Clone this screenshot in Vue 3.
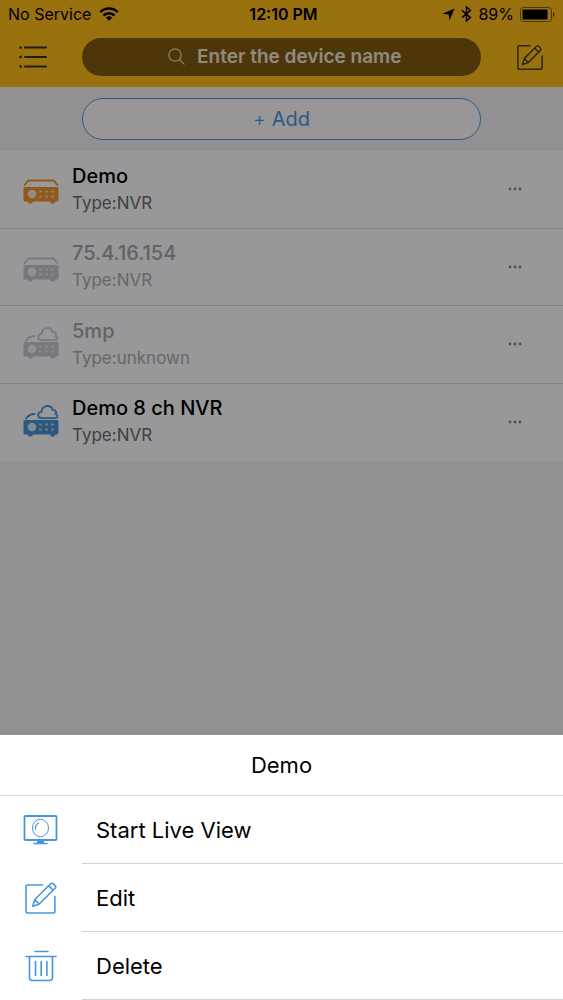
<script setup>
import { ref } from 'vue'

const query = ref('')
const devices = [
  { name: 'Demo', type: 'NVR', tone: 'orange', cloud: false, online: true },
  { name: '75.4.16.154', type: 'NVR', tone: 'grey', cloud: false, online: false },
  { name: '5mp', type: 'unknown', tone: 'grey', cloud: true, online: false },
  { name: 'Demo 8 ch NVR', type: 'NVR', tone: 'blue', cloud: true, online: true },
]
const actions = [
  { label: 'Start Live View', icon: 'monitor' },
  { label: 'Edit', icon: 'edit' },
  { label: 'Delete', icon: 'trash' },
]
</script>

<template>
  <div class="screen">
    <header class="top">
      <div class="status">
        <div class="status-side">
          <span>No Service</span>
          <svg width="20" height="14" viewBox="0 0 20 14" aria-hidden="true">
            <g fill="none" stroke="#000" stroke-width="2.6">
              <path d="M1.3 5.1a12.4 12.4 0 0 1 17.4 0" />
              <path d="M4.5 8.5a7.8 7.8 0 0 1 11 0" />
            </g>
            <path d="M10 13.8l-3-3.1a4.3 4.3 0 0 1 6 0z" />
          </svg>
        </div>
        <strong class="clock">12:10 PM</strong>
        <div class="status-side end">
          <svg width="13" height="13" viewBox="0 0 13 13" aria-hidden="true"><path d="M12.6.4L7.4 12.6 6.7 6.4.4 5.7z" /></svg>
          <svg width="11" height="16" viewBox="0 0 11 16" aria-hidden="true">
            <path d="M1 4.4l8.4 7.2L5.5 15V1l3.9 3.4L1 11.6" fill="none" stroke="#000" stroke-width="1.4" />
          </svg>
          <span>89%</span>
          <svg width="35" height="15" viewBox="0 0 35 15" aria-hidden="true">
            <rect x=".5" y=".5" width="31" height="14" rx="3" fill="none" stroke="#000" stroke-opacity=".5" />
            <rect x="2.5" y="2.5" width="25" height="10" rx="1" />
            <path d="M33 5c2 .7 2 4.3 0 5z" fill-opacity=".6" />
          </svg>
        </div>
      </div>
      <div class="nav">
        <button class="icon-button" type="button" aria-label="Menu">
          <svg width="28" height="24" viewBox="0 0 28 24" fill="none" stroke="#36301c" stroke-linecap="round" stroke-width="2">
            <path d="M6 2.500h21M6 12h21M6 21.500h21" />
            <path d="M1.500 2.500h.2M1.500 12h.2M1.500 21.500h.2" stroke-width="2.400" />
          </svg>
        </button>
        <label class="search">
          <svg width="17" height="17" viewBox="0 0 17 17" fill="none" stroke="#e8d2a8" stroke-width="1.3" stroke-linecap="round" aria-hidden="true">
            <circle cx="7" cy="7" r="6.200" /><path d="M11.500 11.500l4.600 4.600" />
          </svg>
          <input v-model="query" type="text" placeholder="Enter the device name" aria-label="Enter the device name">
        </label>
        <button class="icon-button" type="button" aria-label="Edit devices">
          <svg width="28" height="28" viewBox="0 0 30 30" fill="none" stroke="#4d4024" stroke-width="1.6" stroke-linejoin="round" stroke-linecap="round">
            <path d="M15 3H3a1 1 0 0 0-1 1v23a1 1 0 0 0 1 1h24a1 1 0 0 0 1-1V14" />
            <path d="M7 23l2-6.500L22 3.500q1.300-1 2.600.2l1.600 1.600q1.200 1.300 0 2.600L13 21zM20 5.500l4.200 4.200M9 16.600l4 4.200" />
          </svg>
        </button>
      </div>
    </header>

    <div class="add-bar">
      <button class="add" type="button"><span class="plus">+</span> Add</button>
    </div>

    <ul class="devices">
      <li v-for="d in devices" :key="d.name" class="device" :class="{ offline: !d.online }">
        <svg class="device-icon" :class="d.tone" width="38" height="34" viewBox="0 0 38 34" aria-hidden="true">
          <path v-if="!d.cloud" class="line" d="M2.500 13l3-3.600q.7-.9 2-.9h23q1.300 0 2 .9l3 3.600" />
          <g v-else class="line">
            <path d="M4 13.500q3.500-4.500 8.500-4.500" />
            <path d="M19.500 13.200c-4.500-.3-4.500-6 0-6.400C20-.2 29-.8 30.500 4.800c3.800-.2 4.200 3.400 3 4.200 3 1 2.200 4.200-.5 4.200z" />
          </g>
          <path class="body" d="M3 15h32q1.500 0 1.500 1.500v11.500q0 1.500-1.500 1.500h-1.500l-1.500 2h-3l-1-2H11l-1 2H7l-1.500-2H3q-1.500 0-1.500-1.500V16.500Q1.500 15 3 15z" />
          <circle class="hole" cx="10" cy="22" r="4.300" />
          <g class="hole faint">
            <rect x="17" y="18.500" width="3" height="2" /><rect x="23" y="18.500" width="3" height="2" /><rect x="29" y="18.500" width="3" height="2" />
            <rect x="17" y="23.500" width="3" height="2" /><rect x="23" y="23.500" width="3" height="2" /><rect x="29" y="23.500" width="3" height="2" />
          </g>
        </svg>
        <div class="device-text">
          <div class="name">{{ d.name }}</div>
          <div class="type">Type:{{ d.type }}</div>
        </div>
        <button class="more" type="button" :aria-label="'More options for ' + d.name">
          <svg width="14" height="4" viewBox="0 0 14 4" fill="#85838a"><circle cx="2" cy="2" r="1.400" /><circle cx="7" cy="2" r="1.400" /><circle cx="12" cy="2" r="1.400" /></svg>
        </button>
      </li>
    </ul>

    <div class="overlay">
      <section class="sheet" role="dialog" aria-labelledby="sheet-title">
        <h2 id="sheet-title">Demo</h2>
        <button v-for="a in actions" :key="a.label" class="action" type="button">
          <span class="action-icon">
            <svg v-if="a.icon === 'monitor'" width="36" height="32" viewBox="0 0 36 32" fill="none" stroke="#4796dc" stroke-width="1.500">
              <rect x="1.500" y="2" width="32" height="24" rx="1" stroke-width="1.800" />
              <ellipse cx="17.500" cy="14" rx="8" ry="8.700" stroke-width="1" />
              <path d="M12.500 15.500q-.5-5 3.500-6.500" stroke-width="1.300" />
              <path d="M14 26h7v3h-7z" fill="#4796dc" stroke="none" /><path d="M10.500 29.500h14" />
            </svg>
            <svg v-else-if="a.icon === 'edit'" width="32" height="32" viewBox="0 0 31 31" fill="none" stroke="#4796dc" stroke-width="1.500" stroke-linejoin="round" stroke-linecap="round">
              <path d="M17 3H2a1 1 0 0 0-1 1v25a1 1 0 0 0 1 1h26a1 1 0 0 0 1-1V14" />
              <path d="M7.500 23.500l2-6.500L25 1.600q1.300-1 2.600.2l1.600 1.600q1.200 1.300 0 2.600L13.500 21.500zM23 3.700l4.200 4.200M9.500 17l4 4.200" />
            </svg>
            <svg v-else width="34" height="32" viewBox="0 0 34 32" fill="none" stroke="#4796dc" stroke-width="1.600" stroke-linecap="round">
              <path d="M11 1.500h13M2 6.500h30M5.500 6.500v21q0 3 3 3h17q3 0 3-3v-21M11.500 11.500v14M17.200 11.500v14M22.900 11.500v14" />
            </svg>
          </span>
          <span class="action-label">{{ a.label }}</span>
        </button>
      </section>
    </div>
  </div>
</template>

<style>
html,
body {
  margin: 0;
  background: #f3f1f4;
}
</style>

<style scoped>
.screen {
  min-height: 100vh;
  background: #f3f1f4;
  color: #000;
  font-family: Inter, "Liberation Sans", sans-serif;
}
.screen * {
  box-sizing: border-box;
}
button,
input {
  margin: 0;
  padding: 0;
  border: 0;
  background: none;
  color: inherit;
  font: inherit;
}
svg {
  display: block;
  flex: none;
}
.top {
  background: #ffbc1a;
}
.status {
  display: grid;
  grid-template-columns: 1fr auto 1fr;
  align-items: center;
  height: 28px;
  padding: 0 8px;
  font-size: 16px;
}
.status-side {
  display: flex;
  align-items: center;
  gap: 8px;
}
.end {
  justify-content: flex-end;
  gap: 6px;
}
.clock {
  padding-left: 4px;
  font-weight: 600;
}
.nav {
  display: grid;
  grid-template-columns: 66px 1fr 66px;
  gap: 16px;
  align-items: center;
  padding-bottom: 2px;
  height: 59px;
}
.icon-button {
  display: flex;
  justify-content: center;
}
.search {
  display: flex;
  justify-content: center;
  align-items: center;
  gap: 12px;
  height: 38px;
  padding-left: 10px;
  border-radius: 19px;
  background: #805b12;
}
.search input {
  width: 208px;
  font-size: 19px;
  font-weight: 600;
  outline: none;
}
.search input::placeholder {
  color: #f3e6d4;
  opacity: 1;
}
.add-bar {
  padding: 11px 82px;
}
.add {
  width: 100%;
  height: 42px;
  border: 1px solid #4a9be0;
  border-radius: 21px;
  background: #fdfbff;
  color: #4a95d6;
  font-size: 20px;
}
.plus {
  font-weight: 300;
}
.devices {
  display: grid;
  grid-auto-rows: 1fr;
  min-height: 310px;
  margin: 0;
  padding: 0;
  background: #fefcff;
  list-style: none;
}
.device {
  display: grid;
  grid-template-columns: 38px 1fr 40px;
  column-gap: 12px;
  align-items: center;
  padding: 0 28px 0 22px;
  border-bottom: 1px solid #dddbe0;
}
.device:last-child {
  border-bottom-color: transparent;
}
.name {
  font-size: 20px;
  line-height: 27px;
  font-weight: 500;
}
.type {
  color: #6b696e;
  font-size: 17px;
  line-height: 26px;
}
.offline .name {
  color: #a5a3a8;
}
.offline .type {
  color: #adabb0;
}
.device-icon {
  color: #c5c9d2;
}
.device-icon.orange {
  color: #f2962f;
}
.device-icon.blue {
  color: #4a93d6;
}
.line {
  fill: none;
  stroke: currentColor;
  stroke-width: 1.8;
  stroke-linecap: round;
}
.body {
  fill: currentColor;
}
.hole {
  fill: #fff;
  fill-opacity: 0.8;
}
.faint {
  fill-opacity: 0.55;
}
.more {
  display: flex;
  justify-content: center;
  align-items: center;
  height: 40px;
}
.overlay {
  position: fixed;
  inset: 0;
  display: flex;
  flex-direction: column;
  justify-content: flex-end;
  background: rgba(0, 0, 0, 0.4);
}
.sheet {
  background: #fff;
}
.sheet h2 {
  margin: 0;
  padding: 16px 0;
  border-bottom: 1px solid #dcdadd;
  font-size: 22px;
  line-height: 28px;
  font-weight: 400;
  text-align: center;
}
.action {
  display: grid;
  grid-template-columns: 82px 1fr;
  align-items: center;
  width: 100%;
  height: 68px;
  text-align: left;
}
.action-icon {
  display: flex;
  justify-content: center;
}
.action-label {
  display: flex;
  align-items: center;
  height: 100%;
  padding-left: 14px;
  border-bottom: 1px solid #d3d1d4;
  font-size: 22px;
}
</style>
